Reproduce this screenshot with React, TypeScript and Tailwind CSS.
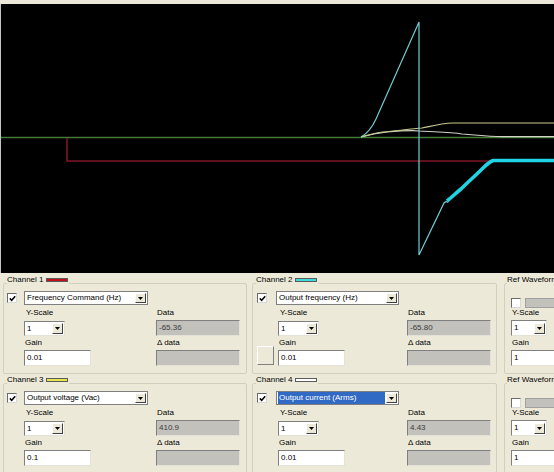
import React from 'react'

type ChannelProps = {
  n: number
  swatch: string
  signal: string
  gain: string
  data: string
  right?: boolean
  selected?: boolean
  extraButton?: boolean
}

const Arrow = ({ small }: { small?: boolean }) => (
  <div
    className={
      small
        ? 'ml-auto mr-[1px] flex h-[11px] w-[11px] items-center justify-center border-t border-l border-b border-r border-t-white border-l-white border-b-[#404040] border-r-[#404040] bg-[#ece9d8]'
        : 'ml-auto mr-[1px] flex h-[10px] w-[11px] items-center justify-center border-t border-l border-b border-r border-t-white border-l-white border-b-[#404040] border-r-[#404040] bg-[#ece9d8]'
    }
  >
    <svg width="5" height="3" viewBox="0 0 5 3">
      <path d="M0 0 H5 L2.5 3 Z" fill="#000" />
    </svg>
  </div>
)

const CheckBox = ({ checked }: { checked?: boolean }) => (
  <div className="flex h-[10px] w-[10px] shrink-0 items-center justify-center border-t border-l border-b border-r border-t-[#6b6b6b] border-l-[#6b6b6b] border-b-[#d8d8d8] border-r-[#d8d8d8] bg-white">
    {checked && (
      <svg width="7" height="7" viewBox="0 0 7 7">
        <path d="M0.8 3.4 L2.7 5.3 L6.2 1.2" fill="none" stroke="#000" strokeWidth="1.5" />
      </svg>
    )}
  </div>
)

const Sunken = 'border-t border-l border-b border-r border-t-[#7f7f7f] border-l-[#7f7f7f] border-b-[#e4e2d6] border-r-[#e4e2d6]'

const Channel = ({ n, swatch, signal, gain, data, right, selected, extraButton }: ChannelProps) => (
  <div
    className={
      right
        ? 'relative h-full w-[245px] shrink-0 rounded-[2px] border border-[#d0d0bf] pl-[4px]'
        : 'relative h-full w-[244px] shrink-0 rounded-[2px] border border-[#d0d0bf] pl-[3px]'
    }
  >
    <div className="absolute left-[3px] -top-[9px] flex h-[10px] items-center bg-[#ece9d8] pr-[1px] leading-[10px]">
      <span>Channel {n}</span>
      <span className={'ml-[3px] h-[4px] w-[22px] border border-[#5a5a5a] ' + swatch} />
    </div>

    <div className="flex h-[14px] items-center pt-0 mt-[7px]">
      <CheckBox checked />
      <div
        className={
          right
            ? 'ml-[9px] flex h-[14px] w-[123px] items-center border border-[#7f7f7f] bg-white pl-[1px]'
            : 'ml-[7px] flex h-[14px] w-[124px] items-center border border-[#7f7f7f] bg-white pl-[1px]'
        }
      >
        <span
          className={
            selected
              ? 'mr-[1px] flex h-[12px] flex-1 items-center bg-[#316ac5] pl-[1px] text-white'
              : 'flex h-[12px] flex-1 items-center pl-[1px]'
          }
        >
          {signal}
        </span>
        <Arrow />
      </div>
    </div>

    <div className="flex">
      <div
        className={
          right
            ? 'flex w-[21px] shrink-0 flex-col justify-end pb-[1px]'
            : 'flex w-[17px] shrink-0 flex-col justify-end'
        }
      >
        {extraButton && (
          <div className="h-[19px] w-[17px] border-t border-l border-b border-r border-t-white border-l-white border-b-[#808080] border-r-[#808080] bg-[#ece9d8]" />
        )}
      </div>

      <div className={right ? 'flex w-[129px] shrink-0 flex-col' : 'flex w-[132px] shrink-0 flex-col'}>
        <div className="mt-[3px] h-[10px] pl-[2px] leading-[10px]">Y-Scale</div>
        <div className={'mt-[3px] flex h-[15px] w-[41px] items-center bg-white pl-[2px] ' + Sunken}>
          <span>1</span>
          <Arrow small />
        </div>
        <div className="mt-[2px] h-[10px] pl-[1px] leading-[10px]">Gain</div>
        <div className={'mt-[2px] flex h-[16px] w-[67px] items-center bg-white pl-[2px] ' + Sunken}>
          {gain}
        </div>
      </div>

      <div className="flex flex-col">
        <div className="mt-[3px] h-[10px] pl-[1px] leading-[10px]">Data</div>
        <div className={'mt-[2px] flex h-[16px] w-[84px] items-center bg-[#c2c1bb] pl-[2px] text-[#3c3c3c] ' + Sunken}>
          {data}
        </div>
        <div className="mt-[2px] h-[10px] pl-[1px] leading-[10px]">Δ data</div>
        <div className={'mt-[2px] h-[16px] w-[84px] bg-[#c2c1bb] ' + Sunken} />
      </div>
    </div>
  </div>
)

const RefGroup = () => (
  <div className="relative h-full w-[70px] shrink-0 rounded-[2px] border border-[#d0d0bf] pl-[6px]">
    <div className="absolute left-[2px] -top-[9px] flex h-[10px] items-center whitespace-nowrap bg-[#ece9d8] pr-[1px] leading-[10px]">
      Ref Waveform
    </div>
    <div className="mt-[14px] flex h-[10px] items-center">
      <CheckBox />
      <div className="ml-[4px] h-[10px] w-[50px] border border-[#a0a0a0] bg-[#c2c1bb]" />
    </div>
    <div className="h-[10px] pl-[1px] leading-[10px]">Y-Scale</div>
    <div className={'mt-[2px] flex h-[16px] w-[36px] items-center bg-white pl-[2px] ' + Sunken}>
      <span>1</span>
      <Arrow small />
    </div>
    <div className="mt-[2px] h-[10px] pl-[1px] leading-[10px]">Gain</div>
    <div className={'mt-[2px] flex h-[16px] w-[60px] items-center bg-white pl-[2px] ' + Sunken}>1</div>
  </div>
)

const Scope = () => (
  <svg width="553" height="269" viewBox="1 4 553 269" className="block">
    <path d="M0 137.5 H554" stroke="#437a38" strokeWidth="1.6" fill="none" />
    <path d="M67 138 V161 H554" stroke="#7e1626" strokeWidth="1.6" fill="none" />
    <path
      d="M361 137 C372 134 378 133 387 132 C398 131 410 130 420 131 C435 132 450 132 462 134 C475 135 490 136.5 503 136.7 H554"
      stroke="#d2d2c6"
      strokeWidth="1.2"
      fill="none"
    />
    <path
      d="M361 137 C368 135 374 133 383 132 C395 131 410 129 422 128 C432 126 440 123.5 453 123 H554"
      stroke="#c9c88c"
      strokeWidth="1.2"
      fill="none"
    />
    <path
      d="M361 137 Q370 132 376 119 L419 22 V255 L444 203 L446 201.5 L448 202.5"
      stroke="#72cdd2"
      strokeWidth="1.2"
      fill="none"
    />
    <path
      d="M447 201 C452 197 456 193 461 189 C468 182 475 176 482 169 C486 165 489 162 493 160.5 H554"
      stroke="#1fd3e3"
      strokeWidth="3.6"
      fill="none"
    />
  </svg>
)

export default function App() {
  return (
    <div className="h-[472px] w-[554px] overflow-hidden bg-[#ece9d8] font-['Liberation_Sans',Arial,sans-serif] text-[8px] text-black">
      <div className="h-[4px]" />
      <div className="h-[269px] border-l border-[#c4c4c4] bg-black">
        <Scope />
      </div>

      <div className="flex flex-col gap-[9px] pl-[3px] pt-[10px]">
        <div className="flex h-[91px] gap-[5px]">
          <Channel n={1} swatch="bg-[#c0101c]" signal="Frequency Command (Hz)" gain="0.01" data="-65.36" />
          <Channel n={2} swatch="bg-[#3fd8d8]" signal="Output frequency (Hz)" gain="0.01" data="-65.80" right extraButton />
          <div className="ml-[2px]">
            <RefGroup />
          </div>
        </div>
        <div className="flex h-[100px] gap-[5px]">
          <Channel n={3} swatch="bg-[#e6e64a]" signal="Output voltage (Vac)" gain="0.1" data="410.9" />
          <Channel n={4} swatch="bg-white" signal="Output current (Arms)" gain="0.01" data="4.43" right selected />
          <div className="ml-[2px]">
            <RefGroup />
          </div>
        </div>
      </div>
    </div>
  )
}
